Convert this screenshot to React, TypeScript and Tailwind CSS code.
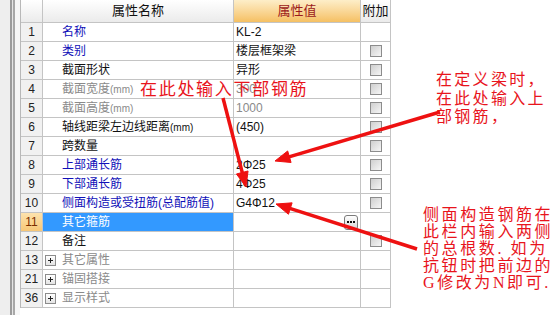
import React from "react";

type Tone = "blue" | "black" | "grey";

type Row = {
  no: string;
  name: string;
  unit?: string;
  value?: string;
  tone: Tone;
  valueGrey?: boolean;
  check?: boolean;
  group?: boolean;
  selected?: boolean;
};

const rows: Row[] = [
  { no: "1", name: "名称", value: "KL-2", tone: "blue" },
  { no: "2", name: "类别", value: "楼层框架梁", tone: "blue", check: true },
  { no: "3", name: "截面形状", value: "异形", tone: "black", check: true },
  { no: "4", name: "截面宽度", unit: "(mm)", value: "300", tone: "grey", valueGrey: true, check: true },
  { no: "5", name: "截面高度", unit: "(mm)", value: "1000", tone: "grey", valueGrey: true, check: true },
  { no: "6", name: "轴线距梁左边线距离", unit: "(mm)", value: "(450)", tone: "black", check: true },
  { no: "7", name: "跨数量", tone: "black", check: true },
  { no: "8", name: "上部通长筋", value: "2Φ25", tone: "blue", check: true },
  { no: "9", name: "下部通长筋", value: "4Φ25", tone: "blue", check: true },
  { no: "10", name: "侧面构造或受扭筋(总配筋值)", value: "G4Φ12", tone: "blue", check: true },
  { no: "11", name: "其它箍筋", tone: "blue", selected: true },
  { no: "12", name: "备注", tone: "black", check: true },
  { no: "13", name: "其它属性", tone: "grey", group: true },
  { no: "21", name: "锚固搭接", tone: "grey", group: true },
  { no: "36", name: "显示样式", tone: "grey", group: true },
];

const toneClass: Record<Tone, string> = {
  blue: "text-[#1010b8]",
  black: "text-[#111]",
  grey: "text-[#8a8a8a]",
};

const Checkbox = () => (
  <div className="w-[12px] h-[12px] border border-[#8c8c8c] bg-linear-to-br from-[#cfcfcf] to-[#f6f6f6]" />
);

const PlusBox = () => (
  <div className="relative w-[11px] h-[11px] border border-[#8c8c8c] bg-linear-to-b from-white to-[#e4e4e4]">
    <div className="absolute left-[2px] top-[4px] w-[5px] h-px bg-[#222]" />
    <div className="absolute left-[4px] top-[2px] w-px h-[5px] bg-[#222]" />
  </div>
);

const EllipsisButton = () => (
  <div className="flex items-center justify-center gap-[1px] w-[14px] h-[15px] rounded-[3px] border border-[#7a7a7a] bg-linear-to-b from-white to-[#d8d8d8]">
    <div className="w-[2px] h-[2px] bg-[#111]" />
    <div className="w-[2px] h-[2px] bg-[#111]" />
    <div className="w-[2px] h-[2px] bg-[#111]" />
  </div>
);

function arrowHead(x1: number, y1: number, x2: number, y2: number, len = 15, half = 6) {
  const a = Math.atan2(y2 - y1, x2 - x1);
  const bx = x2 - len * Math.cos(a);
  const by = y2 - len * Math.sin(a);
  const px = -Math.sin(a) * half;
  const py = Math.cos(a) * half;
  return `${x2},${y2} ${bx + px},${by + py} ${bx - px},${by - py}`;
}

const arrows = [
  { x1: 223, y1: 98, x2: 246, y2: 187 },
  { x1: 440, y1: 112, x2: 275, y2: 161 },
  { x1: 417, y1: 249, x2: 276, y2: 204 },
];

const cell = "border-r border-b border-[#c4c4c4] h-[19px] flex items-center";

export default function App() {
  return (
    <div className="relative w-[557px] h-[315px] overflow-hidden bg-white flex font-['Liberation_Sans','Noto_Sans_CJK_SC',sans-serif] text-[12px]">
      {/* left frame */}
      <div className="flex h-full">
        <div className="w-[10px] bg-[#eeeeee]" />
        <div className="w-[2px] bg-[#9c9c9c]" />
        <div className="w-[1px] bg-[#e6e6e6]" />
        <div className="w-[2px] bg-[#a8a8a8]" />
        <div className="w-[5px] bg-[#f7f7f7]" />
      </div>

      {/* property grid */}
      <div className="self-start border-l border-[#b8b8b8] grid grid-cols-[22px_191px_127px_30px]">
        <div className="border-r border-b border-[#c4c4c4] h-[23px] bg-linear-to-b from-white to-[#ebebeb]" />
        <div className="border-r border-b border-[#c4c4c4] h-[23px] bg-linear-to-b from-white to-[#ebebeb] flex items-center justify-center text-[13px] text-[#111]">
          属性名称
        </div>
        <div className="border-r border-b border-[#c4c4c4] h-[23px] bg-linear-to-b from-[#fdeec8] to-[#f5c062] flex items-center justify-center text-[13px] text-[#9b1b1b]">
          属性值
        </div>
        <div className="border-r border-b border-[#c4c4c4] h-[23px] bg-linear-to-b from-white to-[#ebebeb] flex items-center justify-center text-[13px] text-[#111]">
          附加
        </div>

        {rows.map((r) => (
          <React.Fragment key={r.no}>
            <div
              className={`${cell} justify-center ${
                r.selected ? "bg-linear-to-b from-[#fde3ad] to-[#f7c777] text-[#7a2e00]" : "bg-[#f1f1f1] text-[#222]"
              }`}
            >
              {r.no}
            </div>
            <div
              className={`${cell} ${r.group ? "pl-[2px] gap-[6px]" : "pl-[19px]"} ${
                r.selected ? "bg-[#3399ff] text-white" : toneClass[r.tone]
              } whitespace-nowrap`}
            >
              {r.group && <PlusBox />}
              <span>
                {r.name}
                {r.unit && <span className="text-[10px]">{r.unit}</span>}
              </span>
            </div>
            <div
              className={`${cell} pl-[2px] pr-[2px] whitespace-nowrap ${
                r.valueGrey ? "text-[#8a8a8a]" : "text-[#111]"
              } ${r.selected ? "justify-end" : ""}`}
            >
              {r.selected ? <EllipsisButton /> : r.value}
            </div>
            <div className={`${cell} justify-center`}>{r.check && <Checkbox />}</div>
          </React.Fragment>
        ))}
      </div>

      {/* annotations */}
      <div className="absolute left-[140px] top-[80px] leading-[20px] text-[17px] tracking-[1.7px] text-[#e8141c] whitespace-nowrap font-['Liberation_Serif','Noto_Sans_CJK_SC',serif]">
        在此处输入下部钢筋
      </div>

      <div className="absolute left-[436px] top-[71px] leading-[18.5px] text-[16px] tracking-[2.3px] text-[#e8141c] whitespace-nowrap font-['Liberation_Serif','Noto_Sans_CJK_SC',serif]">
        <div>在定义梁时，</div>
        <div>在此处输入上</div>
        <div>部钢筋，</div>
      </div>

      <div className="absolute left-[423px] top-[206px] leading-[17px] text-[16px] tracking-[2.6px] text-[#e8141c] whitespace-nowrap font-['Liberation_Serif','Noto_Sans_CJK_SC',serif]">
        <div>侧面构造钢筋在</div>
        <div>此栏内输入两侧</div>
        <div>的总根数. 如为</div>
        <div>抗钮时把前边的</div>
        <div>G修改为N即可.</div>
      </div>

      <svg className="absolute inset-0 pointer-events-none" width={557} height={315}>
        {arrows.map((a, i) => {
          const ang = Math.atan2(a.y2 - a.y1, a.x2 - a.x1);
          const ex = a.x2 - 12 * Math.cos(ang);
          const ey = a.y2 - 12 * Math.sin(ang);
          return (
            <g key={i} fill="#ee1111" stroke="#ee1111">
              <line x1={a.x1} y1={a.y1} x2={ex} y2={ey} strokeWidth={3.5} />
              <polygon points={arrowHead(a.x1, a.y1, a.x2, a.y2)} strokeWidth={1} />
            </g>
          );
        })}
      </svg>
    </div>
  );
}
